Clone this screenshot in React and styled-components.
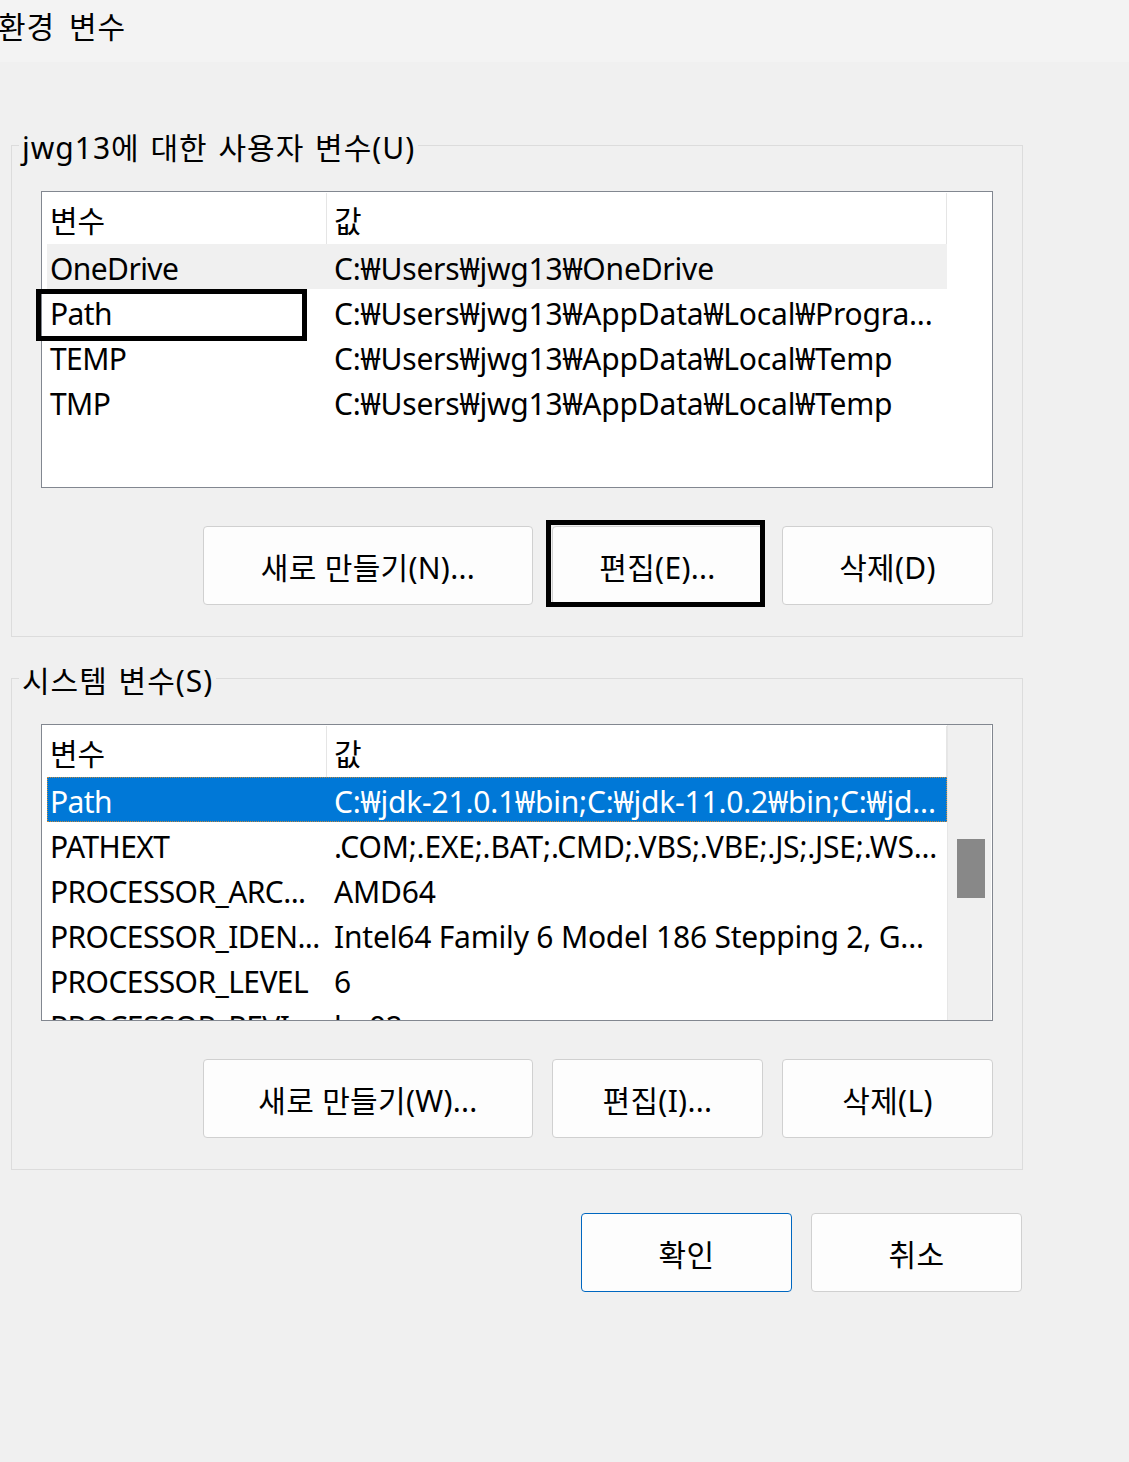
import styled, { createGlobalStyle } from 'styled-components'

const FONT = `"Segoe UI", "Noto Sans", "Noto Sans CJK KR", sans-serif`

const Global = createGlobalStyle`
  html, body {
    margin: 0;
    padding: 0;
    background: #f0f0f0;
  }
  body {
    font-family: ${FONT};
    color: #000;
  }
  * {
    box-sizing: border-box;
  }
`

const Window = styled.div`
  width: 1129px;
  height: 1462px;
  background: #f0f0f0;
  overflow: hidden;
`

const TitleBar = styled.div`
  height: 62px;
  background: #f3f3f3;
  display: flex;
  align-items: flex-start;
`
const Title = styled.div`
  font-size: 30px;
  line-height: 54px;
  margin-left: -2px;
  letter-spacing: 1px;
  word-spacing: 5px;
`

const Group = styled.fieldset`
  margin: ${p => p.$top}px 0 0 11px;
  width: 1012px;
  border: 1px solid #dcdcdc;
  padding: 26px 29px 31px 29px;
  min-width: 0;
`
const Legend = styled.legend`
  font-size: 30px;
  line-height: 34px;
  padding: 6px 3px 0;
  margin-left: -22px;
  letter-spacing: 1px;
  word-spacing: 2px;
`

const List = styled.div`
  position: relative;
  height: 297px;
  border: 1px solid #828790;
  background: #fff;
  padding: 1px 0 0 5px;
  overflow-x: visible;
  overflow-y: clip;
  display: flex;
`
const Rows = styled.div`
  width: 900px;
  flex: none;
`
const Header = styled.div`
  display: flex;
  height: 51px;
  align-items: center;
  font-size: 30px;
  border-right: 1px solid #e5e5e5;
`
const HeadCell = styled.div`
  width: ${p => p.$w || 'auto'};
  flex: ${p => (p.$w ? 'none' : '1')};
  height: 100%;
  display: flex;
  align-items: center;
  padding-left: ${p => p.$pad}px;
  border-right: ${p => (p.$w ? '1px solid #e5e5e5' : 'none')};
`
const Row = styled.div`
  position: relative;
  display: flex;
  height: 45px;
  align-items: center;
  font-size: 30px;
  white-space: nowrap;
  background: ${p => (p.$selected ? '#0078d7' : p.$hover ? '#f0f0f0' : 'transparent')};
  color: ${p => (p.$selected ? '#fff' : '#000')};
  outline: ${p => (p.$selected ? '1px dotted #c58a3c' : 'none')};
  outline-offset: -1px;
`
const Cell = styled.div`
  width: ${p => p.$w || 'auto'};
  flex: ${p => (p.$w ? 'none' : '1')};
  overflow: hidden;
  padding-left: ${p => p.$pad}px;
  padding-top: 4px;
  letter-spacing: ${p => (p.$w ? '-0.6px' : '-0.2px')};
`
const FocusMark = styled.div`
  position: absolute;
  left: -11px;
  top: 0;
  width: 271px;
  height: 52px;
  border: 5px solid #000;
  pointer-events: none;
`

const Scrollbar = styled.div`
  width: 44px;
  margin-top: -1px;
  background: #f0f0f0;
  border-left: 1px solid #e6e6e6;
  position: relative;
  flex: none;
`
const Thumb = styled.div`
  position: absolute;
  left: 9px;
  top: ${p => p.$top}px;
  width: 28px;
  height: 59px;
  background: #888;
`

const ButtonRow = styled.div`
  display: flex;
  justify-content: flex-end;
  gap: 19px;
  margin-top: ${p => p.$top}px;
`
const Button = styled.div`
  position: relative;
  width: ${p => p.$w}px;
  height: 79px;
  border: 1px solid ${p => (p.$primary ? '#0067c0' : '#d0d0d0')};
  border-radius: 4px;
  background: #fdfdfd;
  display: flex;
  align-items: center;
  justify-content: center;
  font-size: 30px;
  letter-spacing: 0.3px;
  white-space: nowrap;
`
const ButtonFocus = styled.div`
  position: absolute;
  left: -7px;
  top: -7px;
  width: 219px;
  height: 87px;
  border: 5px solid #000;
`

const Footer = styled.div`
  display: flex;
  justify-content: flex-end;
  gap: 19px;
  width: 1022px;
  margin-top: 43px;
`

const userVars = [
  ['OneDrive', 'C:₩Users₩jwg13₩OneDrive'],
  ['Path', 'C:₩Users₩jwg13₩AppData₩Local₩Progra...'],
  ['TEMP', 'C:₩Users₩jwg13₩AppData₩Local₩Temp'],
  ['TMP', 'C:₩Users₩jwg13₩AppData₩Local₩Temp'],
]

const sysVars = [
  ['Path', 'C:₩jdk-21.0.1₩bin;C:₩jdk-11.0.2₩bin;C:₩jd...'],
  ['PATHEXT', '.COM;.EXE;.BAT;.CMD;.VBS;.VBE;.JS;.JSE;.WS...'],
  ['PROCESSOR_ARC...', 'AMD64'],
  ['PROCESSOR_IDEN...', 'Intel64 Family 6 Model 186 Stepping 2, G...'],
  ['PROCESSOR_LEVEL', '6'],
  ['PROCESSOR_REVI...', 'ba02'],
]

function VarList({ items, hover, selected, marked, scroll }) {
  return (
    <List>
      <Rows>
        <Header>
          <HeadCell $w="280px" $pad={3}>변수</HeadCell>
          <HeadCell $pad={7}>값</HeadCell>
        </Header>
        {items.map(([name, value], i) => (
          <Row key={name} $hover={i === hover} $selected={i === selected}>
            <Cell $w="280px" $pad={3}>{name}</Cell>
            <Cell $pad={7}>{value}</Cell>
            {i === marked && <FocusMark />}
          </Row>
        ))}
      </Rows>
      {scroll && (
        <Scrollbar>
          <Thumb $top={114} />
        </Scrollbar>
      )}
    </List>
  )
}

export default function App() {
  return (
    <Window>
      <Global />
      <TitleBar>
        <Title>환경 변수</Title>
      </TitleBar>

      <Group $top={63}>
        <Legend>jwg13에 대한 사용자 변수(U)</Legend>
        <VarList items={userVars} hover={0} marked={1} />
        <ButtonRow $top={38}>
          <Button $w={330}>새로 만들기(N)...</Button>
          <Button $w={211}>
            편집(E)...
            <ButtonFocus />
          </Button>
          <Button $w={211}>삭제(D)</Button>
        </ButtonRow>
      </Group>

      <Group $top={21}>
        <Legend>시스템 변수(S)</Legend>
        <VarList items={sysVars} selected={0} scroll />
        <ButtonRow $top={38}>
          <Button $w={330}>새로 만들기(W)...</Button>
          <Button $w={211}>편집(I)...</Button>
          <Button $w={211}>삭제(L)</Button>
        </ButtonRow>
      </Group>

      <Footer>
        <Button $w={211} $primary>확인</Button>
        <Button $w={211}>취소</Button>
      </Footer>
    </Window>
  )
}
